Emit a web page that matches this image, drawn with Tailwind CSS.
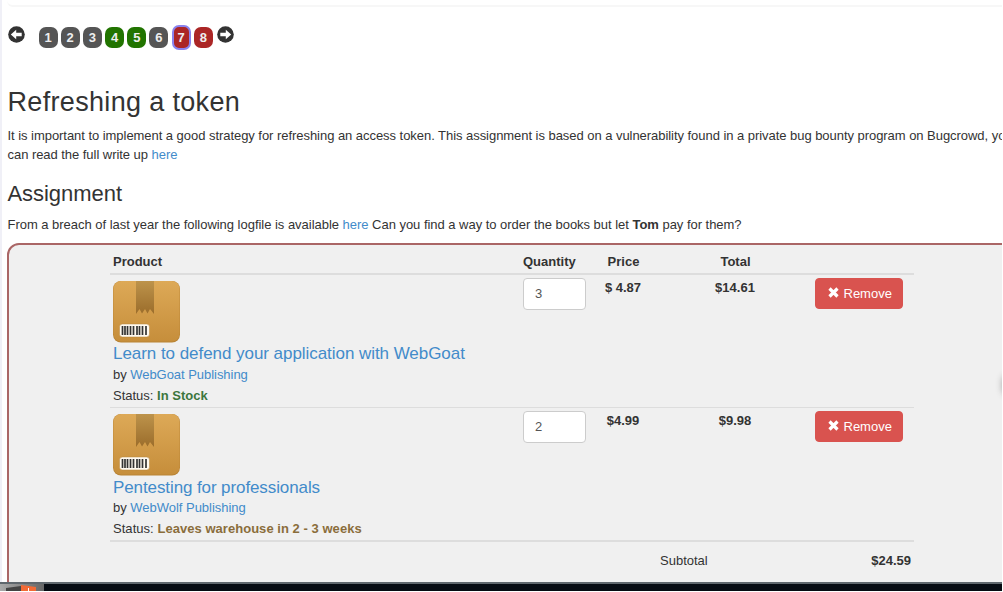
<!DOCTYPE html>
<html lang="en">
<head>
    <meta charset="UTF-8">
    <meta name="viewport" content="width=device-width, initial-scale=1.0">
    <title>Refreshing a token</title>
    <script src="https://cdn.jsdelivr.net/npm/@tailwindcss/browser@4"></script>
</head>
<body class="bg-white overflow-hidden font-['Liberation_Sans',Arial,sans-serif] text-[13px] leading-[18px] text-[#333]">
<div class="relative w-[1003px] h-[592px] overflow-hidden flex flex-col">
    <main class="w-[1002px] h-[582px] shrink-0 overflow-hidden border-l-2 border-[#f0f0f7] pl-[5px]">
        <div class="h-[7px] border-b-2 border-[#f7f7f7] rounded-bl-md"></div>

        <!-- lesson pages -->
        <nav class="flex h-[74px] pt-[18px] pl-[0.5px] text-[13px] font-bold text-[#eee]">
            <svg class="w-[17px] h-[17px] mt-[1px] mr-[14px] shrink-0" viewBox="0 0 17 17">
                <circle cx="8.5" cy="8.5" r="8.3" fill="#333"/>
                <path d="M2.8 8.500 8.200 3.800v3h5.500v3.400H8.200v3z" fill="#fff"/>
            </svg>
            <div class="flex gap-[3.2px] mt-[2px]">
                <a class="w-[19px] h-[21px] rounded-[7px] bg-[#555] text-center leading-[22px]">1</a>
                <a class="w-[19px] h-[21px] rounded-[7px] bg-[#555] text-center leading-[22px]">2</a>
                <a class="w-[19px] h-[21px] rounded-[7px] bg-[#555] text-center leading-[22px]">3</a>
                <a class="w-[19px] h-[21px] rounded-[7px] bg-[#217400] text-center leading-[22px]">4</a>
                <a class="w-[19px] h-[21px] rounded-[7px] bg-[#217400] text-center leading-[22px]">5</a>
                <a class="w-[19px] h-[21px] rounded-[7px] bg-[#555] text-center leading-[22px]">6</a>
                <a class="w-[19px] h-[25px] -mt-[2px] rounded-[7px] border-2 border-[#8a83ee] bg-[#ab2626] text-center leading-[22px]">7</a>
                <a class="w-[19px] h-[21px] rounded-[7px] bg-[#ab2626] text-center leading-[22px]">8</a>
            </div>
            <svg class="w-[17px] h-[17px] mt-[1px] ml-[4px] shrink-0" viewBox="0 0 17 17">
                <circle cx="8.5" cy="8.5" r="8.3" fill="#333"/>
                <path d="M14.200 8.500 8.800 3.800v3H3.300v3.400h5.500v3z" fill="#fff"/>
            </svg>
        </nav>

        <h1 class="h-[46px] pt-[6px] pl-[0.5px] text-[27px] leading-[30px] tracking-[0.33px]">Refreshing a token</h1>
        <p class="h-[51px] pl-[0.5px] whitespace-nowrap leading-[18.5px] tracking-[-0.045px]">It is important to implement a good strategy for refreshing an access token. This assignment is based on a vulnerability found in a private bug bounty program on Bugcrowd, you<br>can read the full write up <a href="#" class="text-[#428bca]">here</a></p>
        <h2 class="h-[38px] pt-[3px] pl-[0.5px] text-[22px] leading-[26px] tracking-[-0.05px]">Assignment</h2>
        <p class="h-[27px] pl-[0.5px] whitespace-nowrap tracking-[-0.027px]">From a breach of last year the following logfile is available <a href="#" class="text-[#428bca]">here</a> Can you find a way to order the books but let <b>Tom</b> pay for them?</p>

        <!-- shopping cart -->
        <section class="w-[1020px] h-[400px] rounded-[12px] border-2 border-[#a66] bg-[#f0f0f0] pl-[101px]">
            <div class="w-[804px]">
                <div class="flex h-[30px] border-b-2 border-[#ddd] pl-[3px] pt-[8px] font-bold">
                    <div class="w-[410px]">Product</div>
                    <div class="w-[66px]">Quantity</div>
                    <div class="w-[68px] pl-px text-center">Price</div>
                    <div class="w-[156px] pl-px text-center">Total</div>
                </div>
                <div class="flex h-[133px] border-b border-[#ddd] pl-[3px]">
                    <div class="w-[410px] pt-[5px]">
                        <svg class="block w-[67px] h-[63px]" viewBox="0 0 67 63">
                            <defs>
                                <linearGradient id="box" x1="0" y1="0" x2="0" y2="1"><stop stop-color="#dda957"/><stop offset="1" stop-color="#c68e3b"/></linearGradient>
                                <linearGradient id="tape" x1="0" y1="0" x2="0" y2="1"><stop stop-color="#bd934b"/><stop offset="1" stop-color="#9b6d2b"/></linearGradient>
                            </defs>
                            <rect y="1" width="67" height="61.5" rx="8" fill="#b98435"/>
                            <rect x=".4" y="1" width="66.2" height="60.5" rx="8" fill="url(#box)"/>
                            <path d="M23 1h18v33l-4-5-2.500 4.500-2.500-4.500-3 4.500-2.500-4.500-3.500 5z" fill="url(#tape)"/>
                            <rect x="6.500" y="44" width="30" height="13" rx="3" fill="#fffaf0" stroke="#b5853d" stroke-width=".5"/>
                            <path d="M9.500 46v9M12 46v9M14.500 46v9M17.500 46v9M20.500 46v9M24 46v9M26.500 46v9M29.500 46v9M33 46v9" stroke="#333" stroke-width="1.700"/>
                        </svg>
                        <h4 class="pt-[1px] text-[17px] leading-[20px] tracking-[-0.05px] text-[#428bca]">Learn to defend your application with WebGoat</h4>
                        <div class="pt-[2px] leading-[18px] tracking-[-0.04px]">by <a href="#" class="text-[#428bca]">WebGoat Publishing</a></div>
                        <div class="pt-[3px] leading-[18px]">Status: <b class="text-[#3c763d]">In Stock</b></div>
                    </div>
                    <div class="w-[66px] pt-[3px]">
                        <div class="w-[63px] h-[32px] rounded-[4px] border border-[#ccc] bg-white pl-[11px] leading-[30px] text-[#555]">3</div>
                    </div>
                    <div class="w-[68px] pt-[4px] text-center font-bold">$ 4.87</div>
                    <div class="w-[156px] pt-[4px] text-center font-bold">$14.61</div>
                    <div class="pt-[3px] pl-[2px]">
                        <button class="flex w-[88px] h-[31px] items-center rounded-[4px] border border-[#d9534f] bg-[#d9534f] pl-[12px] text-white">
                            <svg class="w-[11px] h-[11px] mr-[4.500px] -mt-[2px]" viewBox="0 0 11 11"><path d="M1.500 1.500l8 8m0-8l-8 8" stroke="#fff" stroke-width="3.200"/></svg>Remove
                        </button>
                    </div>
                </div>
                <div class="flex h-[134px] border-b-2 border-[#ddd] pl-[3px]">
                    <div class="w-[410px] pt-[5px]">
                        <svg class="block w-[67px] h-[63px]" viewBox="0 0 67 63">
                            <rect y="1" width="67" height="61.5" rx="8" fill="#b98435"/>
                            <rect x=".4" y="1" width="66.2" height="60.5" rx="8" fill="url(#box)"/>
                            <path d="M23 1h18v33l-4-5-2.500 4.500-2.500-4.500-3 4.500-2.500-4.500-3.500 5z" fill="url(#tape)"/>
                            <rect x="6.500" y="44" width="30" height="13" rx="3" fill="#fffaf0" stroke="#b5853d" stroke-width=".5"/>
                            <path d="M9.500 46v9M12 46v9M14.500 46v9M17.500 46v9M20.500 46v9M24 46v9M26.500 46v9M29.500 46v9M33 46v9" stroke="#333" stroke-width="1.700"/>
                        </svg>
                        <h4 class="pt-[2px] text-[17px] leading-[20px] tracking-[-0.1px] text-[#428bca]">Pentesting for professionals</h4>
                        <div class="pt-[1px] leading-[18px] tracking-[-0.02px]">by <a href="#" class="text-[#428bca]">WebWolf Publishing</a></div>
                        <div class="pt-[3px] leading-[18px] tracking-[0.04px]">Status: <b class="text-[#8a6d3b]">Leaves warehouse in 2 - 3 weeks</b></div>
                    </div>
                    <div class="w-[66px] pt-[3px]">
                        <div class="w-[63px] h-[32px] rounded-[4px] border border-[#ccc] bg-white pl-[11px] leading-[30px] text-[#555]">2</div>
                    </div>
                    <div class="w-[68px] pt-[4px] text-center font-bold">$4.99</div>
                    <div class="w-[156px] pt-[4px] text-center font-bold">$9.98</div>
                    <div class="pt-[3px] pl-[2px]">
                        <button class="flex w-[88px] h-[31px] items-center rounded-[4px] border border-[#d9534f] bg-[#d9534f] pl-[12px] text-white">
                            <svg class="w-[11px] h-[11px] mr-[4.500px] -mt-[2px]" viewBox="0 0 11 11"><path d="M1.500 1.500l8 8m0-8l-8 8" stroke="#fff" stroke-width="3.200"/></svg>Remove
                        </button>
                    </div>
                </div>
                <div class="flex justify-between pl-[550px] pr-[3px] pt-[10px]">
                    <div>Subtotal</div>
                    <b>$24.59</b>
                </div>
            </div>
        </section>
    </main>

    <!-- taskbar -->
    <footer class="w-[1002px] h-[9px] border-t-2 border-[#5f676d] bg-[#060b12]">
        <div class="w-[44px] h-[7px] bg-linear-to-r from-[#aaa] to-[#666]">
            <svg class="block w-[44px] h-[7px]" viewBox="0 0 44 7">
                <path d="M6 4 21 2v5H6z" fill="#444"/>
                <path d="M21 1l15 2v4H21z" fill="#f26a35"/>
                <path d="M28.500 4v3" stroke="#fff"/>
            </svg>
        </div>
    </footer>
    <div class="absolute left-[1002px] top-[374px] w-4 h-[22px] rounded-full shadow-[0_0_6px_#aaa]"></div>
    <div class="absolute right-0 top-0 w-px h-full bg-white"></div>
</div>
</body>
</html>
